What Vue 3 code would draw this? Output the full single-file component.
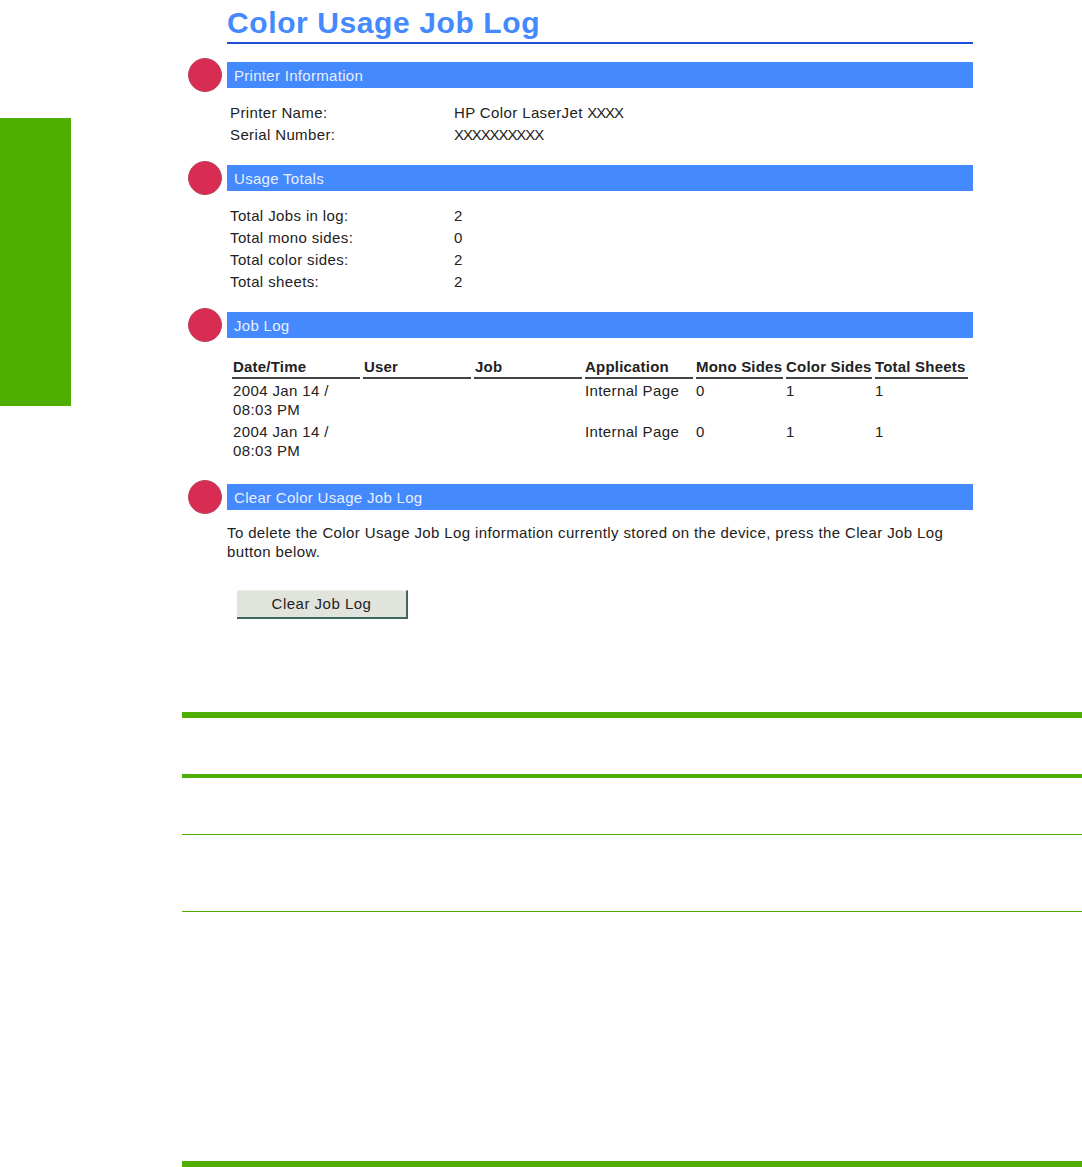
<script setup>
const printerInfo = [
  { label: "Printer Name:", value: "HP Color LaserJet ", mask: "XXXX" },
  { label: "Serial Number:", value: "", mask: "XXXXXXXXXX" },
];
const totals = [
  { label: "Total Jobs in log:", value: "2" },
  { label: "Total mono sides:", value: "0" },
  { label: "Total color sides:", value: "2" },
  { label: "Total sheets:", value: "2" },
];
const columns = [
  { name: "Date/Time", width: 131 },
  { name: "User", width: 111 },
  { name: "Job", width: 111 },
  { name: "Application", width: 111 },
  { name: "Mono Sides", width: 90 },
  { name: "Color Sides", width: 89 },
  { name: "Total Sheets", width: 96 },
];
const jobs = [
  ["2004 Jan 14 / 08:03 PM", "", "", "Internal Page", "0", "1", "1"],
  ["2004 Jan 14 / 08:03 PM", "", "", "Internal Page", "0", "1", "1"],
];
</script>

<template>
  <div class="page">
    <div class="side-tab"></div>
    <div class="main">
      <div class="shot">
        <h1 class="title">Color Usage Job Log</h1>

        <div class="section-head first">
          <span class="dot"></span>
          <div class="bar">Printer Information</div>
        </div>
        <div class="info info-printer">
          <div v-for="row in printerInfo" :key="row.label" class="info-row">
            <span class="info-label">{{ row.label }}</span>
            <span>{{ row.value }}<span class="mask">{{ row.mask }}</span></span>
          </div>
        </div>

        <div class="section-head">
          <span class="dot"></span>
          <div class="bar">Usage Totals</div>
        </div>
        <div class="info info-totals">
          <div v-for="row in totals" :key="row.label" class="info-row">
            <span class="info-label">{{ row.label }}</span>
            <span>{{ row.value }}</span>
          </div>
        </div>

        <div class="section-head">
          <span class="dot"></span>
          <div class="bar">Job Log</div>
        </div>
        <div class="log">
          <div class="log-row log-header">
            <div v-for="col in columns" :key="col.name" class="cell" :style="{ width: col.width + 'px' }">
              <span class="col-name">{{ col.name }}</span>
            </div>
          </div>
          <div v-for="(job, i) in jobs" :key="i" class="log-row">
            <div v-for="(val, j) in job" :key="j" class="cell" :style="{ width: columns[j].width + 'px' }">
              {{ val }}
            </div>
          </div>
        </div>

        <div class="section-head">
          <span class="dot"></span>
          <div class="bar">Clear Color Usage Job Log</div>
        </div>
        <p class="clear-text">
          To delete the Color Usage Job Log information currently stored on the device, press the Clear Job Log button below.
        </p>
        <button class="clear-btn" type="button">Clear Job Log</button>
      </div>

      <div class="rule thick"></div>
      <div class="rule mid r2"></div>
      <div class="rule thin r3"></div>
      <div class="rule thin r4"></div>
      <div class="rule thick r5"></div>
    </div>
  </div>
</template>

<style scoped>
.page {
  display: flex;
  width: 1082px;
  height: 1167px;
  overflow: hidden;
  background: #fff;
  color: #222;
  font-family: "Liberation Sans", Arial, sans-serif;
  font-size: 15px;
  letter-spacing: 0.38px;
}

.side-tab {
  width: 71px;
  height: 288px;
  margin-top: 118px;
  margin-right: 111px;
  background: #4fae00;
  flex-shrink: 0;
}

.main {
  flex: 1;
}

.shot {
  width: 791px;
  height: 712px;
  padding-left: 6px;
  box-sizing: border-box;
}

.title {
  width: 746px;
  height: 44px;
  margin: 0 0 0 39px;
  box-sizing: border-box;
  padding-top: 4px;
  border-bottom: 2px solid #1f4fd8;
  color: #4489fd;
  font-size: 30px;
  line-height: 37px;
  font-weight: bold;
  letter-spacing: 0.6px;
}

.section-head {
  display: flex;
  align-items: center;
  gap: 5px;
  height: 34px;
}

.section-head.first {
  margin-top: 14px;
}

.dot {
  width: 34px;
  height: 34px;
  border-radius: 50%;
  background: #d82c52;
  border: 1px solid #b84a60;
  box-sizing: border-box;
  flex-shrink: 0;
}

.bar {
  width: 746px;
  height: 26px;
  padding-left: 7px;
  box-sizing: border-box;
  background: #4489fd;
  color: #e8f0ff;
  line-height: 27px;
  letter-spacing: 0.3px;
}

.info {
  padding-left: 42px;
}

.info-printer {
  padding-top: 10px;
  padding-bottom: 15px;
}

.info-totals {
  padding-top: 10px;
  padding-bottom: 15px;
}

.info-row {
  display: flex;
  height: 22px;
  line-height: 22px;
}

.info-label {
  width: 224px;
}

.mask {
  letter-spacing: -1.1px;
}

.log {
  padding: 7px 0 17px 44px;
}

.log-row {
  display: flex;
}

.cell {
  flex-shrink: 0;
  box-sizing: border-box;
  min-height: 41px;
  padding: 0 8px 0 0;
  line-height: 19px;
}

.cell:nth-child(-n + 3) {
  padding-left: 1px;
}

.log-header {
  height: 30px;
  margin-bottom: 2px;
  align-items: flex-end;
}

.log-header .cell {
  min-height: 0;
  padding: 0 3px 0 0;
}

.col-name {
  display: block;
  padding-bottom: 1px;
  border-bottom: 2px solid #444;
  font-weight: bold;
  letter-spacing: 0.2px;
  white-space: nowrap;
}

.log-header .cell:nth-child(-n + 3) .col-name {
  padding-left: 1px;
}

.clear-text {
  width: 746px;
  margin: 9px 0 0 39px;
  line-height: 19px;
}

.clear-btn {
  display: block;
  width: 171px;
  height: 29px;
  margin: 29px 0 0 49px;
  padding: 0 0 2px;
  background: #e1e4dc;
  color: #222;
  font: inherit;
  letter-spacing: 0.5px;
  border: 0;
  border-top: 1px solid #eef0ea;
  border-right: 2px solid #3f6660;
  border-bottom: 2px solid #3f6660;
  border-radius: 0;
}

.rule {
  width: 900px;
  background: #4fae00;
}

.thick {
  height: 6px;
}

.mid {
  height: 4px;
}

.thin {
  height: 1px;
}

.r2 {
  margin-top: 56px;
}

.r3 {
  margin-top: 56px;
}

.r4 {
  margin-top: 76px;
}

.r5 {
  margin-top: 249px;
}
</style>

<style>
html,
body {
  margin: 0;
  background: #fff;
}
</style>
